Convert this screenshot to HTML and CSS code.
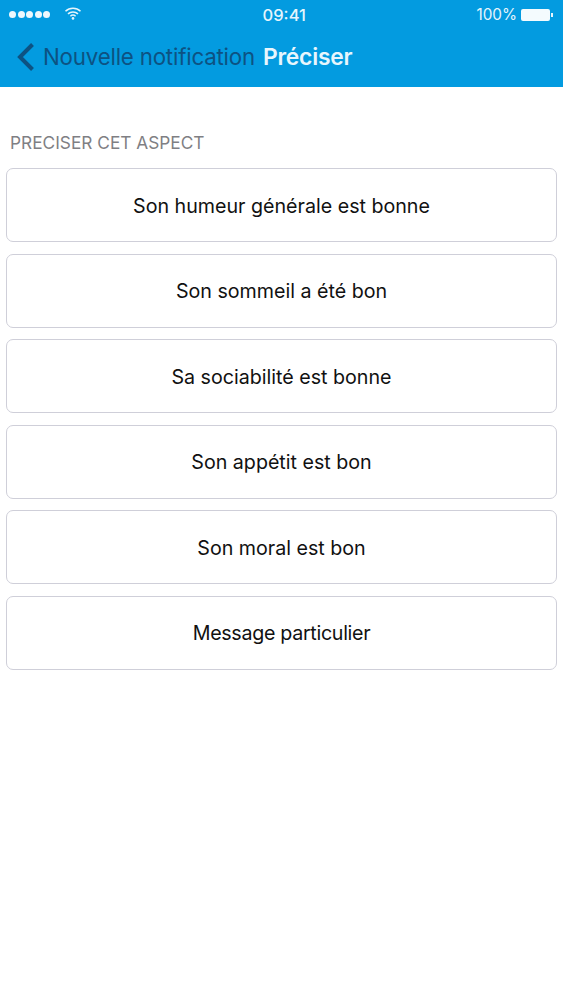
FILE: index.html
```html
<!DOCTYPE html>
<html lang="fr">
<head>
<meta charset="utf-8">
<title>Préciser</title>
<link rel="stylesheet" href="styles.css">
</head>
<body>
<header class="header">
  <div class="status">
    <div class="status-left">
      <span class="dots"><i></i><i></i><i></i><i></i><i></i></span>
      <svg class="wifi" width="18" height="14" viewBox="0 0 18 14"><path d="M1.5 5.2a10.8 10.8 0 0 1 15 0M4 7.9a7.2 7.2 0 0 1 10 0M6.4 10.3a3.8 3.8 0 0 1 5.2 0" fill="none" stroke="#e6f5fc" stroke-width="1.5"/><circle cx="9" cy="12.4" r="1.3" fill="#e6f5fc"/></svg>
    </div>
    <div class="time">09:41</div>
    <div class="status-right">
      <span>100%</span>
      <span class="battery"></span><span class="nub"></span>
    </div>
  </div>
  <div class="nav">
    <svg class="chev" width="20" height="30" viewBox="0 0 20 30"><path d="M17.5 2.5 5 15l12.5 12.5" fill="none" stroke="#0d5282" stroke-width="4"/></svg>
    <span class="back">Nouvelle notification</span>
    <span class="title">Préciser</span>
  </div>
</header>
<main class="content">
  <div class="section">PRECISER CET ASPECT</div>
  <div class="list">
    <div class="item">Son humeur générale est bonne</div>
    <div class="item">Son sommeil a été bon</div>
    <div class="item">Sa sociabilité est bonne</div>
    <div class="item">Son appétit est bon</div>
    <div class="item">Son moral est bon</div>
    <div class="item item-tight">Message particulier</div>
  </div>
</main>
</body>
</html>
```
FILE: styles.css
```css
* { box-sizing: border-box; }
html, body { margin: 0; height: 100%; background: #fff; overflow: hidden; }
body { font-family: Inter, "Liberation Sans", sans-serif; }
.header { height: 87px; background: #039be0; display: flex; flex-direction: column; }
.status { height: 29px; display: flex; align-items: center; justify-content: space-between; padding: 0 10px 0 9px; position: relative; color: #e6f5fc; font-size: 15.3px; }
.status-left { display: flex; align-items: center; gap: 14px; width: 78px; }
.dots { display: flex; gap: 1.5px; }
.dots i { width: 7px; height: 7px; border-radius: 50%; background: #eef8fd; }
.wifi { margin-bottom: 3px; }
.time { font-weight: 500; font-size: 16.5px; margin-left: 5px; }
.status-right { display: flex; align-items: center; }
.battery { width: 29px; height: 12px; background: #f4fbfe; border-radius: 2px; margin-left: 4px; }
.nub { width: 2px; height: 4px; background: #e6f5fc; margin-left: 1px; }
.nav { flex: 1; display: flex; align-items: center; padding: 0 0 3px 15px; }
.chev { margin-right: 8px; }
.back { font-size: 22.3px; color: #0d5282; letter-spacing: -0.2px; }
.title { font-size: 22.8px; font-weight: 600; color: #e8f6fd; margin-left: 8px; letter-spacing: -0.2px; }
.content { padding: 46px 6px 0; }
.section { font-size: 17.3px; color: #7f7f84; padding-left: 4px; height: 35px; line-height: 19px; }
.list { display: flex; flex-direction: column; gap: 11.6px; }
.item { height: 74px; padding-top: 1px; border: 1.5px solid #cfcfd9; border-radius: 7px; display: flex; align-items: center; justify-content: center; font-size: 19.65px; color: #111; }
.item-tight { letter-spacing: -0.3px; }
```
